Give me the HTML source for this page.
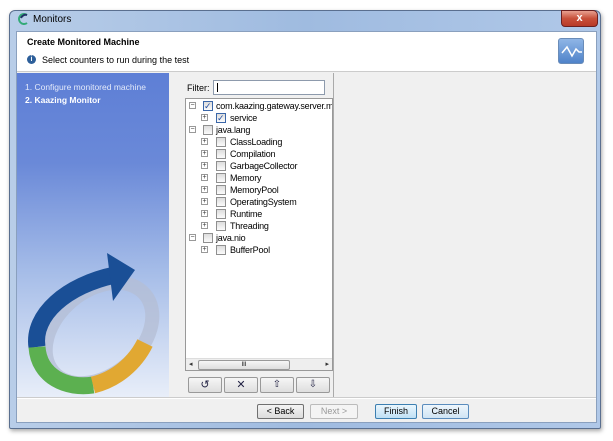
<!DOCTYPE html>
<html><head><style>
*{margin:0;padding:0;box-sizing:border-box}
body{width:613px;height:441px;background:#fff;font-family:"Liberation Sans",sans-serif;font-size:9px;color:#000;position:relative;overflow:hidden}
.a{position:absolute}
.win{left:9px;top:10px;width:592px;height:419px;border-radius:6px 6px 2px 2px;background:linear-gradient(90deg,#b8cde8,#9fbbe0 50%,#b0c8e8);border:1px solid #5a6f8f;box-shadow:1px 2px 4px rgba(0,0,0,.35)}
.cl{left:16px;top:31px;width:581px;height:392px;background:#f0f0f0;border:1px solid #8aa0be}
.tr{position:absolute;left:0;height:12px;line-height:12px;font-size:9px;white-space:nowrap;letter-spacing:-.2px}
.pm{position:absolute;width:7px;height:7px;border:1px solid #999;background:#fff;font-size:7px;line-height:5px;text-align:center;color:#333}
.ck{position:absolute;width:10px;height:10px;border:1px solid #8f8f8f;background:linear-gradient(#ddd,#fbfbfb)}
.btn{position:absolute;top:404px;height:15px;border:1px solid #707070;border-radius:2px;background:linear-gradient(#f4f4f4,#dcdcdc);font-size:9px;text-align:center;line-height:13px}
.tb{position:absolute;top:377px;width:34px;height:16px;border:1px solid #999;border-radius:2px;background:linear-gradient(#f6f6f6,#dedede);font-size:11px;text-align:center;line-height:14px;color:#224}
</style></head><body>
<div class="a win"></div>
<div class="a" style="left:18px;top:13px"><svg width="12" height="12"><path d="M9 2 A5 5 0 1 0 9 10" stroke="#3a7" stroke-width="2" fill="none"/><path d="M9 2 A5 5 0 0 0 3 5" stroke="#236" stroke-width="2" fill="none"/></svg></div>
<div class="a" style="left:33px;top:14px;font-size:10px">Monitors</div>
<div class="a" style="left:561px;top:10px;width:37px;height:17px;border:1px solid #6b2020;border-radius:0 5px 4px 4px;background:linear-gradient(#e8a090,#c8503a 50%,#b83a28);color:#fff;font-weight:bold;font-size:11px;text-align:center;line-height:15px">x</div>
<div class="a cl"></div>
<div class="a" style="left:17px;top:32px;width:579px;height:40px;background:#fff;border-bottom:1px solid #ccc"></div>
<div class="a" style="left:27px;top:37px;font-weight:bold;font-size:9px">Create Monitored Machine</div>
<div class="a" style="left:27px;top:55px;width:9px;height:9px;border-radius:50%;background:#2d5f9a;color:#fff;font-size:7px;text-align:center;line-height:9px;font-weight:bold">i</div>
<div class="a" style="left:42px;top:55px;font-size:9px">Select counters to run during the test</div>
<div class="a" style="left:558px;top:38px;width:26px;height:26px;border-radius:3px;background:linear-gradient(#8fb5e6,#4f83c9);border:1px solid #6a8cb8"><svg width="26" height="26"><path d="M3 14 L8 8 L13 17 L17 10 L20 13 L23 13" stroke="#fff" stroke-width="1.5" fill="none"/></svg></div>
<div class="a" style="left:17px;top:73px;width:152px;height:324px;background:linear-gradient(#5e7fd6 0,#6a89d8 90px,#a6bde8 200px,#e8eef9 324px)"></div>
<div class="a" style="left:25px;top:82px;color:#e3e9fa;font-size:8.5px">1. Configure monitored machine</div>
<div class="a" style="left:25px;top:95px;color:#fff;font-weight:bold;font-size:8.5px">2. Kaazing Monitor</div>
<svg class="a" style="left:17px;top:245px" width="152" height="150">
<ellipse cx="82" cy="88" rx="60" ry="42" transform="rotate(-40 82 88)" stroke="#b4bed4" stroke-width="14" fill="none" opacity=".75"/>
<path d="M20 102 C15 70 50 40 98 30" stroke="#1a4f96" stroke-width="17" fill="none"/>
<path d="M90 8 L118 25 L96 56 Z" fill="#1a4f96"/>
<path d="M20 102 C22 132 50 144 76 140" stroke="#5cb050" stroke-width="17" fill="none"/>
<path d="M76 140 C100 134 118 118 128 98" stroke="#e1a832" stroke-width="17" fill="none"/>
</svg>
<div class="a" style="left:169px;top:73px;width:165px;height:324px;border-right:1px solid #aaa"></div>
<div class="a" style="left:187px;top:83px;font-size:9px">Filter:</div>
<div class="a" style="left:213px;top:80px;width:112px;height:15px;background:#fff;border:1px solid #8d9aac"><div style="position:absolute;left:3px;top:2px;width:1px;height:9px;background:#000"></div></div>
<div class="a" style="left:185px;top:98px;width:148px;height:273px;background:#fff;border:1px solid #999;overflow:hidden">
<div style="position:relative">
<div class="pm" style="left:3px;top:3px">−</div><div class="ck" style="left:17px;top:2px;border-color:#3a66a8;color:#2450a0;font-size:9px;line-height:8px">✓</div><div class="tr" style="left:30px;top:1px">com.kaazing.gateway.server.ma</div>
<div class="pm" style="left:15px;top:15px">+</div><div class="ck" style="left:30px;top:14px;border-color:#3a66a8;color:#2450a0;font-size:9px;line-height:8px">✓</div><div class="tr" style="left:44px;top:13px">service</div>
<div class="pm" style="left:3px;top:27px">−</div><div class="ck" style="left:17px;top:26px"></div><div class="tr" style="left:30px;top:25px">java.lang</div>
<div class="pm" style="left:15px;top:39px">+</div><div class="ck" style="left:30px;top:38px"></div><div class="tr" style="left:44px;top:37px">ClassLoading</div>
<div class="pm" style="left:15px;top:51px">+</div><div class="ck" style="left:30px;top:50px"></div><div class="tr" style="left:44px;top:49px">Compilation</div>
<div class="pm" style="left:15px;top:63px">+</div><div class="ck" style="left:30px;top:62px"></div><div class="tr" style="left:44px;top:61px">GarbageCollector</div>
<div class="pm" style="left:15px;top:75px">+</div><div class="ck" style="left:30px;top:74px"></div><div class="tr" style="left:44px;top:73px">Memory</div>
<div class="pm" style="left:15px;top:87px">+</div><div class="ck" style="left:30px;top:86px"></div><div class="tr" style="left:44px;top:85px">MemoryPool</div>
<div class="pm" style="left:15px;top:99px">+</div><div class="ck" style="left:30px;top:98px"></div><div class="tr" style="left:44px;top:97px">OperatingSystem</div>
<div class="pm" style="left:15px;top:111px">+</div><div class="ck" style="left:30px;top:110px"></div><div class="tr" style="left:44px;top:109px">Runtime</div>
<div class="pm" style="left:15px;top:123px">+</div><div class="ck" style="left:30px;top:122px"></div><div class="tr" style="left:44px;top:121px">Threading</div>
<div class="pm" style="left:3px;top:135px">−</div><div class="ck" style="left:17px;top:134px"></div><div class="tr" style="left:30px;top:133px">java.nio</div>
<div class="pm" style="left:15px;top:147px">+</div><div class="ck" style="left:30px;top:146px"></div><div class="tr" style="left:44px;top:145px">BufferPool</div>
</div>
<div style="position:absolute;left:0;top:259px;width:146px;height:13px;background:#eee;border-top:1px solid #ddd">
<div style="position:absolute;left:3px;top:1px;font-size:7px;color:#333">◂</div>
<div style="position:absolute;left:12px;top:1px;width:92px;height:10px;border:1px solid #999;border-radius:2px;background:linear-gradient(#f6f6f6,#ddd);font-size:6px;text-align:center;line-height:8px">III</div>
<div style="position:absolute;right:3px;top:1px;font-size:7px;color:#333">▸</div>
</div></div>
<div class="tb" style="left:188px">↺</div>
<div class="tb" style="left:224px">✕</div>
<div class="tb" style="left:260px;font-size:10px">⇧</div>
<div class="tb" style="left:296px;font-size:10px">⇩</div>
<div class="a" style="left:17px;top:397px;width:579px;height:1px;background:#ccc"></div>
<div class="a" style="left:17px;top:398px;width:579px;height:1px;background:#fff"></div>
<div class="btn" style="left:257px;width:47px">&lt; Back</div>
<div class="btn" style="left:310px;width:48px;color:#999;border-color:#bbb;background:#f4f4f4">Next &gt;</div>
<div class="btn" style="left:375px;width:42px;border-color:#3c7fb1;background:linear-gradient(#eaf6fd,#bfe0f5)">Finish</div>
<div class="btn" style="left:422px;width:47px;border-color:#5a8cbd;background:linear-gradient(#eef6fc,#cfe4f4)">Cancel</div>
</body></html>
